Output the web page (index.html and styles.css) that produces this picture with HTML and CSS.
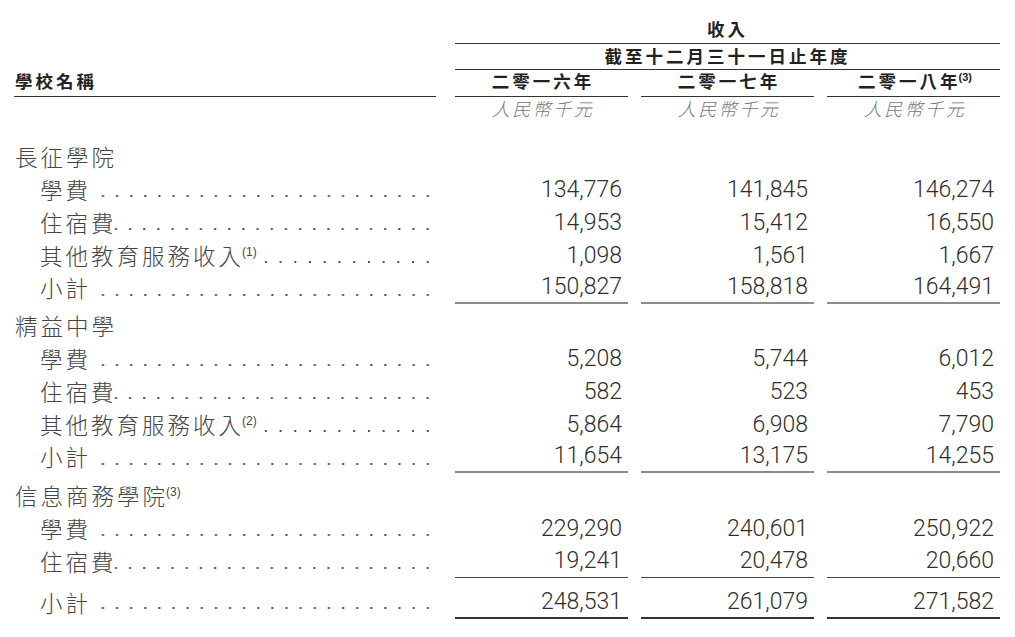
FILE: index.html
```html
<!DOCTYPE html>
<html lang="zh-Hant">
<head>
<meta charset="utf-8">
<title>收入</title>
<link rel="stylesheet" href="styles.css">
</head>
<body>
<div class="sheet">
  <div class="row h-a"><div class="span hd">收入</div></div>
  <div class="row h-b"><div class="span hd">截至十二月三十一日止年度</div></div>
  <div class="row h-c">
    <div class="name-hd">學校名稱</div>
    <div class="yr">二零一六年</div>
    <div class="yr">二零一七年</div>
    <div class="yr">二零一八年<sup class="yr-sup">(3)</sup></div>
  </div>
  <div class="row h-d">
    <div></div>
    <div class="unit">人民幣千元</div>
    <div class="unit">人民幣千元</div>
    <div class="unit">人民幣千元</div>
  </div>

  <div class="body">
    <div class="row sec"><div class="sec-name">長征學院</div></div>
    <div class="row item"><div class="lbl"><span class="txt">學費</span><span class="dots gap"></span></div><div class="num">134,776</div><div class="num">141,845</div><div class="num">146,274</div></div>
    <div class="row item"><div class="lbl"><span class="txt">住宿費</span><span class="dots tight"></span></div><div class="num">14,953</div><div class="num">15,412</div><div class="num">16,550</div></div>
    <div class="row item"><div class="lbl"><span class="txt">其他教育服務收入<sup class="note">(1)</sup></span><span class="dots after-note"></span></div><div class="num">1,098</div><div class="num">1,561</div><div class="num">1,667</div></div>
    <div class="row item sub"><div class="lbl"><span class="txt">小計</span><span class="dots gap"></span></div><div class="num">150,827</div><div class="num">158,818</div><div class="num">164,491</div></div>

    <div class="row sec"><div class="sec-name">精益中學</div></div>
    <div class="row item"><div class="lbl"><span class="txt">學費</span><span class="dots gap"></span></div><div class="num">5,208</div><div class="num">5,744</div><div class="num">6,012</div></div>
    <div class="row item"><div class="lbl"><span class="txt">住宿費</span><span class="dots tight"></span></div><div class="num">582</div><div class="num">523</div><div class="num">453</div></div>
    <div class="row item"><div class="lbl"><span class="txt">其他教育服務收入<sup class="note">(2)</sup></span><span class="dots after-note"></span></div><div class="num">5,864</div><div class="num">6,908</div><div class="num">7,790</div></div>
    <div class="row item sub"><div class="lbl"><span class="txt">小計</span><span class="dots gap"></span></div><div class="num">11,654</div><div class="num">13,175</div><div class="num">14,255</div></div>

    <div class="row sec sec-last"><div class="sec-name">信息商務學院<sup class="note">(3)</sup></div></div>
    <div class="row item"><div class="lbl"><span class="txt">學費</span><span class="dots gap"></span></div><div class="num">229,290</div><div class="num">240,601</div><div class="num">250,922</div></div>
    <div class="row item thin"><div class="lbl"><span class="txt">住宿費</span><span class="dots tight"></span></div><div class="num">19,241</div><div class="num">20,478</div><div class="num">20,660</div></div>
    <div class="row item total"><div class="lbl"><span class="txt">小計</span><span class="dots gap"></span></div><div class="num">248,531</div><div class="num">261,079</div><div class="num">271,582</div></div>
  </div>
</div>
</body>
</html>
```
FILE: styles.css
```css
html, body {
  margin: 0;
  background: #ffffff;
}

body {
  font-family: "Noto Sans CJK TC", "Liberation Sans", sans-serif;
  color: #454545;
}

.sheet {
  padding: 14px 15px 0 14px;
}

.row {
  display: grid;
  grid-template-columns: 428px repeat(3, 173px);
  column-gap: 13px;
  box-sizing: border-box;
}

/* ---------- header ---------- */
.hd, .yr, .name-hd {
  font-weight: 700;
  font-size: 17.5px;
  letter-spacing: 3px;
  color: #222222;
}

.span {
  grid-column: 2 / 5;
  text-align: center;
  border-bottom: 1px solid #333333;
  box-sizing: border-box;
}

.h-a .span {
  height: 30px;
  line-height: 28px;
  padding-top: 1px;
}

.h-b .span {
  height: 26px;
  line-height: 24px;
}

.h-c {
  height: 27px;
}

.h-c > div {
  line-height: 22px;
  border-bottom: 1px solid #333333;
  box-sizing: border-box;
  height: 27px;
}

.name-hd {
  margin-right: 6px;
  padding-left: 1px;
}

.yr {
  text-align: center;
  padding-left: 3px;
}

.yr-sup {
  font-family: "Liberation Sans", sans-serif;
  font-size: 11px;
  letter-spacing: 0;
  vertical-align: 7px;
  line-height: 0;
  margin-left: -2px;
}

.h-d {
  height: 24px;
}

.unit {
  text-align: center;
  font-style: italic;
  font-weight: 300;
  font-size: 18px;
  letter-spacing: 2.5px;
  line-height: 22px;
  color: #777777;
  padding-left: 3px;
}

/* ---------- body ---------- */
.body {
  margin-top: 19px;
}

.row.sec {
  height: 33px;
  margin-top: 5px;
}

.row.sec.sec-last {
  margin-top: 6px;
}

.body > .row.sec:first-child {
  margin-top: 0;
}

.sec-name {
  font-weight: 300;
  font-size: 22.5px;
  letter-spacing: 3px;
  line-height: 33px;
  padding-left: 1px;
}

.item {
  height: 33px;
}

.lbl {
  display: flex;
  margin-right: 7px;
  padding-left: 26px;
  font-weight: 300;
  font-size: 22.5px;
  letter-spacing: 3px;
  line-height: 33px;
  height: 33px;
}

.txt {
  white-space: nowrap;
}

.dots {
  flex: 1;
  background-image: radial-gradient(circle, #505050 0.9px, rgba(80, 80, 80, 0) 1.3px);
  background-size: 14px 4px;
  background-repeat: space no-repeat;
  background-position: left 0 top 21px;
}

.dots.gap {
  margin-left: 5px;
}

.dots.tight {
  margin-left: -8px;
}

.dots.after-note {
  margin-left: 2px;
}

.note {
  font-family: "Liberation Sans", sans-serif;
  font-size: 12px;
  letter-spacing: 0;
  vertical-align: 9px;
  line-height: 0;
  margin-left: -2px;
}

.num {
  font-family: Roboto, "Liberation Sans", sans-serif;
  font-weight: 300;
  font-size: 23px;
  text-align: right;
  padding-right: 6px;
  line-height: 33px;
  color: #2e2e2e;
  box-sizing: border-box;
}

.item.sub {
  height: 32px;
}

.sub .num {
  border-bottom: 2px solid #8c8c8c;
  line-height: 30px;
  height: 32px;
}

.sub .lbl {
  line-height: 30px;
  height: 32px;
}

.sub .dots {
  background-position: left 0 top 21px;
}

.thin .num {
  border-bottom: 1px solid #444444;
  line-height: 32px;
  height: 33px;
}

.total {
  height: 41px;
  padding-top: 9px;
}

.total .lbl {
  line-height: 30px;
  height: 30px;
}

.total .dots {
  background-position: left 0 top 19px;
}

.total .num {
  line-height: 30px;
  height: 32px;
  border-bottom: 2px solid #333333;
  box-shadow: 0 2px 0 #ffffff, 0 4px 0 #8c8c8c;
}
```
